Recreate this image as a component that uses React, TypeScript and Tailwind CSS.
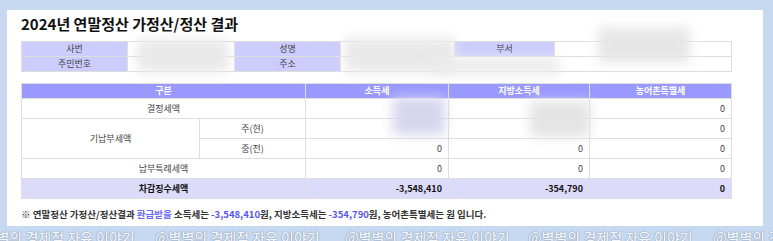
import React from "react";

const font = { fontFamily: '"Noto Sans CJK KR", "Noto Sans", sans-serif' };

function Blur({ className }: { className: string }) {
  return <div className={`pointer-events-none absolute blur-[6px] ${className}`} />;
}

export default function App() {
  const marks = [-30, 155, 345, 528, 713];
  return (
    <div className="relative h-[241px] w-[773px] overflow-hidden bg-[#c6d9f0]" style={font}>
      <div className="ml-[7px] mt-[10px] h-[216px] w-[756px] bg-white px-[14px]">
        <h1 className="pt-[3px] text-[15px] leading-[22px] font-bold text-[#111]">2024년 연말정산 가정산/정산 결과</h1>

        <table className="mt-[6px] w-[710px] table-fixed border-collapse text-[9px] text-[#444]">
          <colgroup>
            <col className="w-[106px]" />
            <col className="w-[107px]" />
            <col className="w-[106px]" />
            <col className="w-[114px]" />
            <col className="w-[100px]" />
            <col className="w-[177px]" />
          </colgroup>
          <tbody>
            <tr className="h-[15px]">
              <td className="border border-[#dedede] bg-[#ccccff] p-0 text-center">사번</td>
              <td className="border border-[#dedede] p-0"></td>
              <td className="border border-[#dedede] bg-[#ccccff] p-0 text-center">성명</td>
              <td className="border border-[#dedede] p-0"></td>
              <td className="border border-[#dedede] bg-[#ccccff] p-0 text-center">부서</td>
              <td className="border border-[#dedede] p-0"></td>
            </tr>
            <tr className="h-[15px]">
              <td className="border border-[#dedede] bg-[#ccccff] p-0 text-center">주민번호</td>
              <td className="border border-[#dedede] p-0"></td>
              <td className="border border-[#dedede] bg-[#ccccff] p-0 text-center">주소</td>
              <td colSpan={3} className="border border-[#dedede] p-0"></td>
            </tr>
          </tbody>
        </table>

        <table className="mt-[11px] w-[710px] table-fixed border-collapse text-[9px] text-[#444]">
          <colgroup>
            <col className="w-[178px]" />
            <col className="w-[106px]" />
            <col className="w-[143px]" />
            <col className="w-[141px]" />
            <col className="w-[142px]" />
          </colgroup>
          <thead>
            <tr className="h-[15px] bg-[#9999ff] text-white">
              <th colSpan={2} className="border border-[#dedede] p-0 font-bold">구분</th>
              <th className="border border-[#dedede] p-0 font-bold">소득세</th>
              <th className="border border-[#dedede] p-0 font-bold">지방소득세</th>
              <th className="border border-[#dedede] p-0 font-bold">농어촌특별세</th>
            </tr>
          </thead>
          <tbody>
            <tr className="h-[20px]">
              <td colSpan={2} className="border border-[#dedede] p-0 text-center">결정세액</td>
              <td className="border border-[#dedede] p-0"></td>
              <td className="border border-[#dedede] p-0"></td>
              <td className="border border-[#dedede] px-[6px] py-0 text-right">0</td>
            </tr>
            <tr className="h-[20px]">
              <td rowSpan={2} className="border border-[#dedede] p-0 text-center">기납부세액</td>
              <td className="border border-[#dedede] p-0 text-center">주(현)</td>
              <td className="border border-[#dedede] p-0"></td>
              <td className="border border-[#dedede] p-0"></td>
              <td className="border border-[#dedede] px-[6px] py-0 text-right">0</td>
            </tr>
            <tr className="h-[20px]">
              <td className="border border-[#dedede] p-0 text-center">중(전)</td>
              <td className="border border-[#dedede] px-[6px] py-0 text-right">0</td>
              <td className="border border-[#dedede] px-[6px] py-0 text-right">0</td>
              <td className="border border-[#dedede] px-[6px] py-0 text-right">0</td>
            </tr>
            <tr className="h-[20px]">
              <td colSpan={2} className="border border-[#dedede] p-0 text-center">납부특례세액</td>
              <td className="border border-[#dedede] px-[6px] py-0 text-right">0</td>
              <td className="border border-[#dedede] px-[6px] py-0 text-right">0</td>
              <td className="border border-[#dedede] px-[6px] py-0 text-right">0</td>
            </tr>
            <tr className="h-[20px] bg-[#dcdcfa] font-bold text-[#111]">
              <td colSpan={2} className="border border-[#dedede] p-0 text-center">차감징수세액</td>
              <td className="border border-[#dedede] px-[6px] py-0 text-right">-3,548,410</td>
              <td className="border border-[#dedede] px-[6px] py-0 text-right">-354,790</td>
              <td className="border border-[#dedede] px-[6px] py-0 text-right">0</td>
            </tr>
          </tbody>
        </table>

        <p className="mt-[8px] text-[9.5px] leading-[14px] font-bold text-[#333]">
          ※ 연말정산 가정산/정산결과 <span className="text-[#6666ff]">환급받을</span> 소득세는{" "}
          <span className="text-[#5555ee]">-3,548,410</span>원, 지방소득세는{" "}
          <span className="text-[#5555ee]">-354,790</span>원, 농어촌특별세는 원 입니다.
        </p>
      </div>

      <div className="absolute left-0 top-[227px] h-[20px] w-full">
        {marks.map((x) => (
          <span
            key={x}
            className="absolute top-0 whitespace-nowrap text-[14px] leading-[20px] font-medium text-[#f2f6fc] [text-shadow:0_0_1px_#7f8ea8,0_0_1px_#7f8ea8]"
            style={{ left: x }}
          >
            @별별의 경제적 자유 이야기
          </span>
        ))}
      </div>

      <Blur className="left-[137px] top-[40px] h-[32px] w-[92px] bg-[#e9e9e9]" />
      <Blur className="left-[345px] top-[38px] h-[34px] w-[110px] bg-[#e9e9e9]" />
      <Blur className="left-[598px] top-[28px] h-[34px] w-[92px] bg-[#e6e6e6]" />
      <Blur className="left-[428px] top-[58px] h-[16px] w-[132px] bg-[#ebebeb]" />
      <Blur className="left-[393px] top-[97px] h-[38px] w-[52px] bg-[#d6d6ee]" />
      <Blur className="left-[530px] top-[101px] h-[36px] w-[60px] bg-[#e4e4e4]" />
    </div>
  );
}
